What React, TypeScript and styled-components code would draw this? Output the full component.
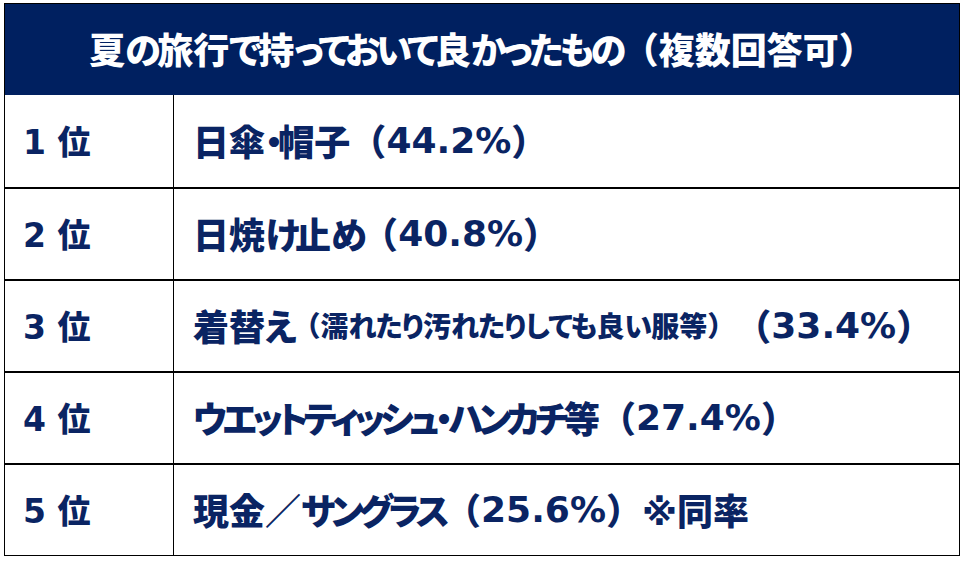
import React from "react";
import styled, { createGlobalStyle } from "styled-components";

const Global = createGlobalStyle`
  html, body { margin: 0; padding: 0; background: #ffffff; }
  body { font-family: "DejaVu Sans", "Noto Sans CJK JP", sans-serif; }
`;

const Page = styled.div`
  width: 964px;
  height: 562px;
  padding: 3px 4px 0 4px;
  box-sizing: border-box;
  background: #ffffff;
`;

const Table = styled.div`
  width: 956px;
  display: grid;
  grid-template-columns: 169px 1fr;
  border: 1px solid #000000;
  box-sizing: border-box;
`;

const Header = styled.div`
  grid-column: 1 / span 2;
  height: 91px;
  background: #002060;
  color: #ffffff;
  display: flex;
  align-items: center;
  justify-content: center;
  font-family: "DejaVu Sans", "Noto Sans CJK JP", sans-serif;
  font-weight: 900;
  font-size: 36px;
  font-feature-settings: "palt";
  --kana-ls: -0.1em;
  padding-bottom: 4px;
  box-sizing: border-box;
  white-space: nowrap;
`;

const Cell = styled.div<{ $first?: boolean; $rank?: boolean }>`
  height: 92px;
  box-sizing: border-box;
  border-top: ${(p) => (p.$first ? "0" : "2px solid #000000")};
  border-right: ${(p) => (p.$rank ? "1px solid #000000" : "0")};
  display: flex;
  align-items: center;
  padding-left: ${(p) => (p.$rank ? "18px" : "19px")};
  padding-bottom: 2px;
  color: #0a2463;
  font-family: "DejaVu Sans", "Noto Sans CJK JP", sans-serif;
  font-weight: 900;
  font-size: ${(p) => (p.$rank ? "33px" : "36px")};
  font-feature-settings: "palt";
  --kana-ls: -0.13em;
  white-space: nowrap;
`;

const Full = styled.span`
  font-feature-settings: normal;
`;

const Kana = styled.span`
  letter-spacing: var(--kana-ls);
`;

const Small = styled.span`
  font-size: 28px;
  --kana-ls: -0.03em;
`;

function T({ s }: { s: string }) {
  const parts = s.split(/([（）／]|[\u3040-\u30ff]+)/).filter((p) => p !== "");
  return (
    <>
      {parts.map((p, i) => {
        if (/^[（）／]$/.test(p)) return <Full key={i}>{p}</Full>;
        if (/^[\u3040-\u30ff]+$/.test(p)) return <Kana key={i}>{p}</Kana>;
        return <React.Fragment key={i}>{p}</React.Fragment>;
      })}
    </>
  );
}

type Row = { rank: string; item: React.ReactNode };

const rows: Row[] = [
  { rank: "1 位", item: <T s="日傘・帽子（44.2%）" /> },
  { rank: "2 位", item: <T s="日焼け止め（40.8%）" /> },
  {
    rank: "3 位",
    item: (
      <>
        <T s="着替え" />
        <Small>
          <T s="（濡れたり汚れたりしても良い服等）" />
        </Small>
        <T s="（33.4%）" />
      </>
    ),
  },
  { rank: "4 位", item: <T s="ウエットティッシュ・ハンカチ等（27.4%）" /> },
  { rank: "5 位", item: <T s="現金／サングラス（25.6%）※同率" /> },
];

export default function App() {
  return (
    <Page>
      <Global />
      <Table>
        <Header>
          <T s="夏の旅行で持っておいて良かったもの（複数回答可）" />
        </Header>
        {rows.map((r, i) => (
          <React.Fragment key={r.rank}>
            <Cell $rank $first={i === 0}>
              {r.rank}
            </Cell>
            <Cell $first={i === 0}>{r.item}</Cell>
          </React.Fragment>
        ))}
      </Table>
    </Page>
  );
}
